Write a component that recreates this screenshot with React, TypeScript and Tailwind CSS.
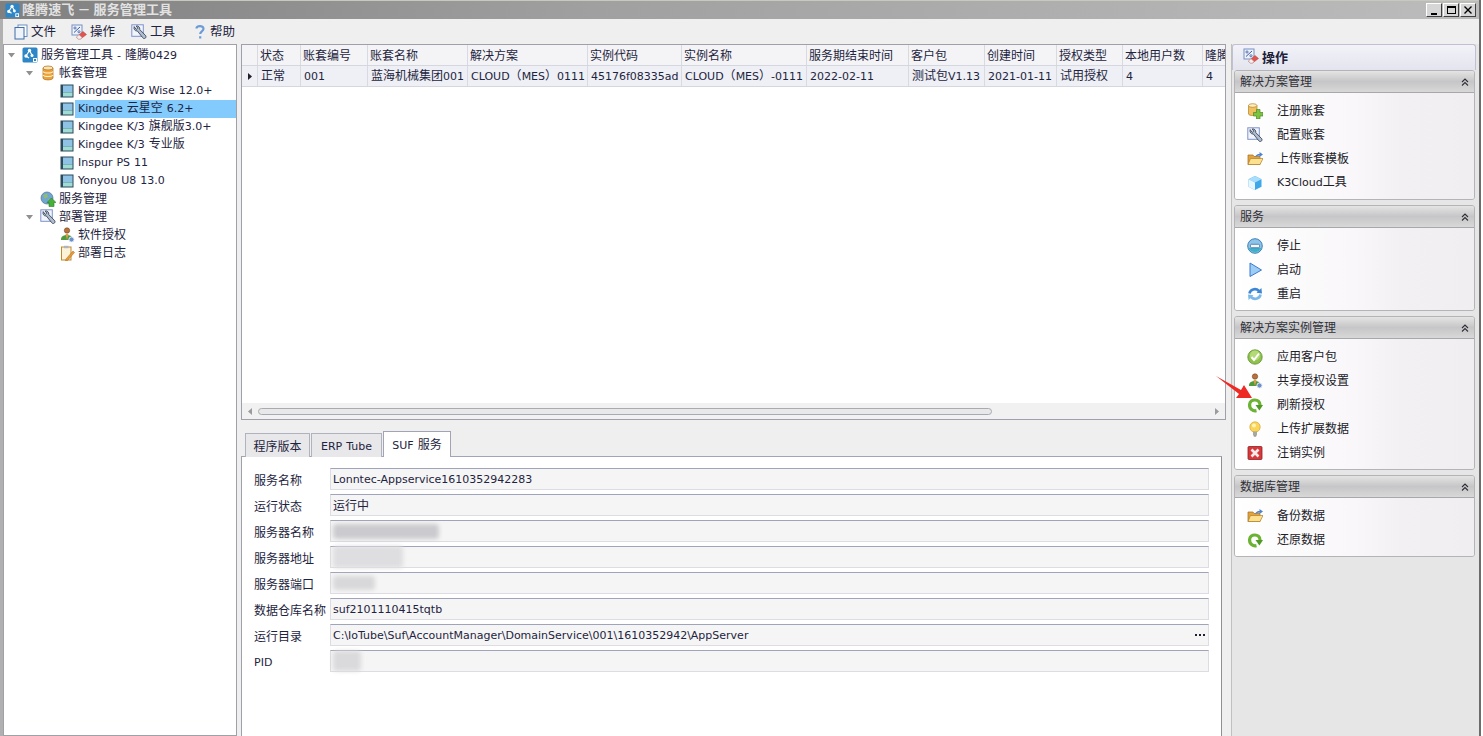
import type { ReactNode } from "react";

const FONT = "font-['Noto_Sans_CJK_SC','Liberation_Sans',sans-serif]";

type IconName =
  | "logo" | "doc" | "percent" | "wrench" | "help" | "db" | "book" | "globe" | "user" | "note"
  | "dbplus" | "folder" | "cube" | "stop" | "play" | "sync" | "check" | "green" | "bulb" | "cross";

// latin runs are set smaller in DejaVu, that is the closest to the Tahoma of the shot
function T({ children }: { children: string }) {
  return (
    <>
      {children.split(/([\x20-\x7e]+)/).map((part, i) =>
        /[\x20-\x7e]/.test(part) ? (
          <span key={i} className="font-['DejaVu_Sans',sans-serif] text-[11px] [word-spacing:0.5px]">
            {part}
          </span>
        ) : (
          part
        )
      )}
    </>
  );
}

function Icon({ name, className = "w-4 h-4" }: { name: IconName; className?: string }) {
  let body: ReactNode = null;
  if (name === "logo") {
    body = (
      <>
        <rect x="0.5" y="0.5" width="15" height="15" rx="1.5" fill="#2f86c6" />
        <path d="M7.5 3.5 L4 9 M7.5 3.5 L10.5 9 M4 9 L7 11" stroke="#fff" strokeWidth="1.2" fill="none" />
        <circle cx="7.5" cy="3.5" r="1.7" fill="#fff" />
        <circle cx="4" cy="9" r="1.7" fill="#fff" />
        <circle cx="10" cy="8.5" r="1.5" fill="#fff" />
        <rect x="11" y="11" width="4" height="4" fill="#fff" />
        <rect x="12" y="12" width="2" height="2" fill="#2f86c6" />
      </>
    );
  } else if (name === "doc") {
    body = (
      <>
        <rect x="5" y="1" width="9" height="11.5" fill="#fff" stroke="#6c8fc0" />
        <rect x="2" y="3.5" width="9" height="11.5" fill="#eef3fa" stroke="#3f6da8" />
      </>
    );
  } else if (name === "percent") {
    body = (
      <>
        <rect x="1" y="1" width="10" height="10" fill="#eef3fb" stroke="#7590c4" />
        <path d="M3 8.5 L9 3" stroke="#3b5aa0" strokeWidth="1" />
        <circle cx="4" cy="4" r="1.1" fill="none" stroke="#3b5aa0" strokeWidth="0.8" />
        <circle cx="8" cy="7.8" r="1.1" fill="none" stroke="#3b5aa0" strokeWidth="0.8" />
        <path d="M5.5 13 L12 7.5 L15.5 10.5 L9.5 15 L7 15 Z" fill="#e2534f" stroke="#b03a3a" strokeWidth="0.5" />
        <path d="M5.5 13 L8 10.8 L11 13.5 L9.5 15 L7 15 Z" fill="#f4f0ee" stroke="#b9a9a9" strokeWidth="0.5" />
      </>
    );
  } else if (name === "wrench") {
    body = (
      <>
        <rect x="0.8" y="0.8" width="11.5" height="11.5" fill="#f2f5fc" stroke="#7f92cc" />
        <path d="M3.2 2.6 C2.4 5 3.8 7.2 6.4 7 L11.6 13.6 C13 15.6 15.8 14 14.8 11.8 L8.8 5.6 C9.2 3.4 7.2 1.4 5.2 2 L6.8 4.2 L5.2 5.4 Z" fill="#aebccb" stroke="#39465e" strokeWidth="0.9" />
      </>
    );
  } else if (name === "help") {
    body = (
      <path d="M4.5 4.5 C4.5 1.5 11.5 1 11.5 4.8 C11.5 7.5 8.2 7.4 8.2 10 M8.2 12.2 L8.2 14.4" fill="none" stroke="#6c9bd8" strokeWidth="2.2" />
    );
  } else if (name === "db") {
    body = (
      <>
        <path d="M3 3 V13 C3 15.5 13 15.5 13 13 V3 Z" fill="#eda33a" stroke="#a86a1e" strokeWidth="0.7" />
        <ellipse cx="8" cy="3" rx="5" ry="2" fill="#fbe3ae" stroke="#a86a1e" strokeWidth="0.7" />
        <path d="M3 6.5 C4 8.5 12 8.5 13 6.5 M3 10 C4 12 12 12 13 10" fill="none" stroke="#fff1cf" strokeWidth="1.1" />
      </>
    );
  } else if (name === "book") {
    body = (
      <>
        <rect x="1.5" y="1.5" width="13" height="13" fill="#2b4a5c" />
        <rect x="4" y="2.5" width="9.5" height="7" fill="#8fc3e6" />
        <rect x="4" y="9.5" width="9.5" height="4" fill="#9edcd4" />
      </>
    );
  } else if (name === "globe") {
    body = (
      <>
        <circle cx="7" cy="7" r="6" fill="#6fa6d2" stroke="#50708e" strokeWidth="0.7" />
        <path d="M3 4 L7 2.5 L8 6 L4.5 8 Z M8 8 L11 8 L9.5 12 Z" fill="#8fbc78" />
        <path d="M11.5 7 L16 11.5 L14 11.5 L14 15.5 L9 15.5 L9 11.5 L7 11.5 Z" fill="#45b13a" stroke="#2d7a27" strokeWidth="0.6" />
      </>
    );
  } else if (name === "user") {
    body = (
      <>
        <circle cx="8" cy="3.5" r="2.7" fill="#b9713a" stroke="#7a4522" strokeWidth="0.6" />
        <path d="M2 12 C2 7 13 6.5 13 11 L13 13 L2 13 Z" fill="#4f9a3c" />
        <path d="M6.5 7 L8 13 L9.5 7 Z" fill="#d8a04c" />
        <circle cx="12.5" cy="12.5" r="2.6" fill="#6f8fc8" stroke="#e8eef8" strokeWidth="1" />
      </>
    );
  } else if (name === "note") {
    body = (
      <>
        <rect x="2.5" y="2" width="9.5" height="13" fill="#fbf3d8" stroke="#c0892f" />
        <rect x="5" y="0.8" width="4.5" height="2.4" fill="#b0b4bc" />
        <path d="M7 14 L14 6 L15.5 7.5 L8.5 15.5 L6.5 15.8 Z" fill="#eb9a34" stroke="#a4661c" strokeWidth="0.5" />
      </>
    );
  } else if (name === "dbplus") {
    body = (
      <>
        <path d="M1.5 2.5 V11 C2 13 9 13 10 11 V2.5 Z" fill="#f1c15f" stroke="#b37e27" strokeWidth="0.7" />
        <ellipse cx="5.7" cy="2.5" rx="4.2" ry="1.8" fill="#fff0c4" stroke="#b37e27" strokeWidth="0.7" />
        <path d="M9.5 6.5 H13 V9.5 H16 V13 H13 V16 H9.5 V13 H6.5 V9.5 H9.5 Z" fill="#7dc243" stroke="#4a8a23" strokeWidth="0.7" />
      </>
    );
  } else if (name === "folder") {
    body = (
      <>
        <path d="M1 4 H6 L7 5.5 H13 V13.5 H1 Z" fill="#e2a33e" stroke="#a26f20" strokeWidth="0.7" />
        <path d="M1 13.5 L3.5 7.5 H16 L13 13.5 Z" fill="#fbe08f" stroke="#b47f28" strokeWidth="0.7" />
        <path d="M8 6 C9 3.5 11 3 12.5 3 L12.5 1 L16 3.5 L12.5 6 L12.5 4.5 C11 4.5 9.5 5 8 6 Z" fill="#4f83d1" />
      </>
    );
  } else if (name === "cube") {
    body = (
      <>
        <path d="M8 1 L14.5 4.3 V11.7 L8 15 L1.5 11.7 V4.3 Z" fill="#3da7ea" />
        <path d="M8 1 L14.5 4.3 L8 7.5 L1.5 4.3 Z" fill="#a8defb" />
        <path d="M8 7.5 V15 L1.5 11.7 V4.3 Z" fill="#e8f7ff" />
      </>
    );
  } else if (name === "stop") {
    body = (
      <>
        <circle cx="8" cy="8" r="7.3" fill="#8cc3e8" stroke="#3e7fb8" />
        <path d="M1.5 10 C4 15.5 12 15.5 14.5 10 Z" fill="#3fb0c8" />
        <rect x="3.5" y="6.3" width="9" height="3.4" rx="1" fill="#f4f7fb" stroke="#2c5f9a" strokeWidth="0.7" />
      </>
    );
  } else if (name === "play") {
    body = <path d="M3 1 L14.5 8 L3 14.5 Z" fill="#9bcdf5" stroke="#3b78d0" strokeWidth="1" />;
  } else if (name === "sync") {
    body = (
      <>
        <path d="M2.5 7.5 C3 3.5 8.5 1.5 12 5" fill="none" stroke="#3d86d4" strokeWidth="2.6" />
        <path d="M13.5 8.5 C13 12.5 7.5 14.5 4 11" fill="none" stroke="#7ab8ea" strokeWidth="2.6" />
        <path d="M9.5 6.8 L15 7.4 L14.4 2 Z" fill="#3d86d4" />
        <path d="M6.5 9.2 L1 8.6 L1.6 14 Z" fill="#7ab8ea" />
      </>
    );
  } else if (name === "check") {
    body = (
      <>
        <circle cx="8" cy="8" r="7.2" fill="#8fc24e" stroke="#5d8f2a" strokeWidth="0.8" />
        <circle cx="8" cy="6.5" r="5" fill="#b4da78" />
        <path d="M4.5 8 L7 11 L12 4.5" fill="none" stroke="#fff" strokeWidth="2" />
      </>
    );
  } else if (name === "green") {
    body = (
      <>
        <path d="M13 8 C13 1.4 3 1.4 2.6 7.5 C2.3 12 6 14.4 9.5 13.6" fill="none" stroke="#6cb233" strokeWidth="3.2" />
        <path d="M8.5 8 L16 8 L12.4 13.6 Z" fill="#4f9a24" />
      </>
    );
  } else if (name === "bulb") {
    body = (
      <>
        <circle cx="8" cy="6" r="5.2" fill="#f9d65a" stroke="#d8a52f" strokeWidth="0.7" />
        <circle cx="7" cy="4.5" r="2" fill="#fff3b8" />
        <rect x="6" y="10.5" width="4" height="4" fill="#a8a8a0" />
        <rect x="6.8" y="14.5" width="2.4" height="1" fill="#6e6e68" />
      </>
    );
  } else if (name === "cross") {
    body = (
      <>
        <rect x="1" y="1.5" width="14" height="13" rx="1" fill="#d8383a" stroke="#8f2024" strokeWidth="0.8" />
        <path d="M4.5 4.5 L11.5 11.5 M11.5 4.5 L4.5 11.5" stroke="#f7eaea" strokeWidth="2.6" />
      </>
    );
  }
  return (
    <svg viewBox="0 0 16 16" className={`${className} shrink-0`}>
      {body}
    </svg>
  );
}

function Caret() {
  return (
    <svg viewBox="0 0 7 5" className="ml-px w-[7px] h-[5px] shrink-0">
      <path d="M0 0 H7 L3.5 4.5 Z" fill="#909090" />
    </svg>
  );
}

function TreeRow({
  indent,
  icon,
  label,
  caret,
  selected,
  latin,
}: {
  indent: string;
  icon: IconName;
  label: string;
  caret?: boolean;
  selected?: boolean;
  latin?: boolean;
}) {
  return (
    <div className={`h-[18px] flex items-center ${indent}`}>
      <div className="w-[15px] shrink-0 flex items-center">{caret && <Caret />}</div>
      <Icon name={icon} />
      <span
        className={`h-[18px] flex-1 pl-[3px] whitespace-nowrap text-[12px] text-[#1e2440] ${
          latin ? "leading-[14px]" : "leading-[16px]"
        } ${selected ? "bg-[#82cbfc]" : ""}`}
      >
        <T>{label}</T>
      </span>
    </div>
  );
}

const COLUMNS = [
  { w: "w-[43px]", head: "状态", cell: "正常" },
  { w: "w-[67px]", head: "账套编号", cell: "001" },
  { w: "w-[100px]", head: "账套名称", cell: "蓝海机械集团001" },
  { w: "w-[120px]", head: "解决方案", cell: "CLOUD（MES）0111" },
  { w: "w-[94px]", head: "实例代码", cell: "45176f08335ad" },
  { w: "w-[125px]", head: "实例名称", cell: "CLOUD（MES）-0111" },
  { w: "w-[102px]", head: "服务期结束时间", cell: "2022-02-11" },
  { w: "w-[76px]", head: "客户包", cell: "测试包V1.13" },
  { w: "w-[72px]", head: "创建时间", cell: "2021-01-11" },
  { w: "w-[66px]", head: "授权类型", cell: "试用授权" },
  { w: "w-[80px]", head: "本地用户数", cell: "4" },
  { w: "w-[24px]", head: "隆腾", cell: "4" },
];

function DataGrid() {
  return (
    <div className="h-[376px] border border-[#a0a0ac] bg-white flex flex-col">
      <div className="flex h-[21px] bg-[#f4f4f7] border-b border-[#d4d6e0] shrink-0 overflow-hidden">
        <div className="w-[16px] shrink-0 border-r border-[#d8dae2]" />
        {COLUMNS.map((c) => (
          <div key={c.head} className={`${c.w} shrink-0 overflow-hidden whitespace-nowrap border-r border-[#d8dae2] pl-[2px] leading-[19px]`}>
            {c.head}
          </div>
        ))}
      </div>
      <div className="flex h-[21px] bg-[#eef0f5] border-b border-[#d4d6e0] shrink-0 overflow-hidden">
        <div className="w-[16px] shrink-0 border-r border-[#d8dae2] flex items-center justify-center">
          <svg viewBox="0 0 4 7" className="w-1 h-[7px]">
            <path d="M0 0 L4 3.5 L0 7 Z" fill="#20202c" />
          </svg>
        </div>
        {COLUMNS.map((c) => (
          <div key={c.head} className={`${c.w} shrink-0 overflow-hidden whitespace-nowrap border-r border-[#d8dae2] pl-[3px] leading-[18px]`}>
            <T>{c.cell}</T>
          </div>
        ))}
      </div>
      <div className="flex-1" />
      <div className="h-[16px] bg-[#f1f1f1] flex items-center shrink-0 px-[6px]">
        <svg viewBox="0 0 4 7" className="w-1 h-[7px]">
          <path d="M4 0 L0 3.5 L4 7 Z" fill="#9a9aa0" />
        </svg>
        <div className="ml-[6px] w-[734px] h-[7px] rounded-full border border-[#a8aab2] bg-[#e8e8ea]" />
        <div className="flex-1" />
        <svg viewBox="0 0 4 7" className="w-1 h-[7px]">
          <path d="M0 0 L4 3.5 L0 7 Z" fill="#9a9aa0" />
        </svg>
      </div>
    </div>
  );
}

const FIELDS: { label: string; value?: string; blur?: string; more?: boolean }[] = [
  { label: "服务名称", value: "Lonntec-Appservice1610352942283" },
  { label: "运行状态", value: "运行中" },
  { label: "服务器名称", blur: "w-[106px] h-[15px] bg-[#cbcbcf]" },
  { label: "服务器地址", blur: "w-[70px] h-[22px] bg-[#dedee0]" },
  { label: "服务器端口", blur: "w-[42px] h-[14px] bg-[#d8d8da]" },
  { label: "数据仓库名称", value: "suf2101110415tqtb" },
  { label: "运行目录", value: "C:\\IoTube\\Suf\\AccountManager\\DomainService\\001\\1610352942\\AppServer", more: true },
  { label: "PID", blur: "w-[28px] h-[20px] bg-[#dadadc]" },
];

function Form() {
  return (
    <div className="flex flex-col gap-[4px] pt-[11px] pl-[12px] pr-[12px]">
      {FIELDS.map((f) => (
        <div key={f.label} className="flex items-center h-[22px]">
          <span className="w-[76px] shrink-0 whitespace-nowrap text-[12px] pt-[2px]">
            <T>{f.label}</T>
          </span>
          <div className="w-[879px] h-[22px] flex items-center bg-[#f5f5f5] border border-[#dcdce2] border-t-[#a0a4b8] pl-[2px] pr-[2px]">
            {f.value && (
              <span className="whitespace-nowrap flex-1 pb-px">
                <T>{f.value}</T>
              </span>
            )}
            {f.blur && <div className={`${f.blur} blur-[2px] rounded-sm`} />}
            {f.more && (
              <span className="flex gap-[2px] mr-[1px]">
                <i className="w-[2px] h-[2px] bg-[#202030]" />
                <i className="w-[2px] h-[2px] bg-[#202030]" />
                <i className="w-[2px] h-[2px] bg-[#202030]" />
              </span>
            )}
          </div>
        </div>
      ))}
    </div>
  );
}

function Tabs() {
  return (
    <div className="flex items-end h-[25px] pl-[4px] gap-[1px] relative z-10 -mb-px">
      <div className="h-[24px] w-[65px] bg-[#e8e8ea] border border-b-0 border-[#b0b2be] text-center leading-[23px] text-[12px]">程序版本</div>
      <div className="h-[24px] w-[71px] bg-[#e8e8ea] border border-b-0 border-[#b0b2be] text-center leading-[22px] text-[12px]">
        <T>ERP Tube</T>
      </div>
      <div className="h-[26px] w-[68px] bg-white border border-b-0 border-[#a0a4b4] text-center leading-[24px] text-[12px]">
        <T>SUF 服务</T>
      </div>
    </div>
  );
}

const SECTIONS: { title: string; items: [IconName, string][] }[] = [
  {
    title: "解决方案管理",
    items: [
      ["dbplus", "注册账套"],
      ["wrench", "配置账套"],
      ["folder", "上传账套模板"],
      ["cube", "K3Cloud工具"],
    ],
  },
  {
    title: "服务",
    items: [
      ["stop", "停止"],
      ["play", "启动"],
      ["sync", "重启"],
    ],
  },
  {
    title: "解决方案实例管理",
    items: [
      ["check", "应用客户包"],
      ["user", "共享授权设置"],
      ["green", "刷新授权"],
      ["bulb", "上传扩展数据"],
      ["cross", "注销实例"],
    ],
  },
  {
    title: "数据库管理",
    items: [
      ["folder", "备份数据"],
      ["green", "还原数据"],
    ],
  },
];

function Section({ title, items }: { title: string; items: [IconName, string][] }) {
  return (
    <div className="rounded-[3px] border border-[#b4b4b8] overflow-hidden">
      <div className="h-[22px] flex items-center justify-between pl-[5px] pr-[5px] border-b border-[#a8a8ac] bg-[linear-gradient(#e4e4e4,#c6c6c8_50%,#d8d8d8)] text-[12px] text-[#303038]">
        <span className="pb-[2px]">{title}</span>
        <svg viewBox="0 0 8 8" className="w-2 h-2">
          <path d="M1 4 L4 1 L7 4 M1 7.5 L4 4.5 L7 7.5" fill="none" stroke="#303038" strokeWidth="1.1" />
        </svg>
      </div>
      <div className="pt-[6px] pb-[4px] bg-[linear-gradient(90deg,#ffffff,#f9f7f9_50%,#f2f0f2_70%,#f0eef0)]">
        {items.map(([icon, label]) => (
          <div key={label} className="h-[24px] flex items-center pl-[12px]">
            <Icon name={icon} />
            <span className="ml-[14px] pb-[2px] text-[12px] text-[#202028] whitespace-nowrap">
              <T>{label}</T>
            </span>
          </div>
        ))}
      </div>
    </div>
  );
}

export default function App() {
  return (
    <div className={`${FONT} relative w-[1483px] h-[736px] overflow-hidden bg-white text-[12px] text-[#1e2440]`}>
      <div className="w-[1481px] h-full flex flex-col bg-[#efefef] border-l-[3px] border-r-[2px] border-l-[#b0b0b0] border-r-[#6c6c6c]">
        {/* Title bar */}
        <div className="h-[19px] shrink-0 -ml-[3px] flex items-center bg-[linear-gradient(90deg,#808080,#a0a0a0_40%,#bcbcbc)] border-t border-[#c8c8c0]">
          <Icon name="logo" className="ml-[5px] w-[15px] h-[15px]" />
          <span className="ml-[2px] pb-[2px] text-[13px] font-bold tracking-[0.1px] text-[#e2e2e2] whitespace-nowrap">隆腾速飞 － 服务管理工具</span>
          <div className="ml-auto mr-[3px] flex gap-[1px]">
            {["min", "max", "close"].map((k) => (
              <div key={k} className="w-[16px] h-[14px] bg-[#d6d6d6] border border-t-white border-l-white border-r-[#404040] border-b-[#404040] flex items-center justify-center">
                {k === "min" && <i className="w-[6px] h-[2px] bg-black mt-[7px]" />}
                {k === "max" && <i className="w-[9px] h-[8px] border border-t-2 border-black" />}
                {k === "close" && (
                  <svg viewBox="0 0 8 8" className="w-2 h-2">
                    <path d="M0.5 0.5 L7.5 7.5 M7.5 0.5 L0.5 7.5" stroke="#000" strokeWidth="1.4" />
                  </svg>
                )}
              </div>
            ))}
          </div>
        </div>

        {/* Toolbar */}
        <div className="h-[25px] shrink-0 flex items-center text-[12.5px]">
          <div className="flex items-center gap-[2px] ml-[10px]">
            <Icon name="doc" />
            <span>文件</span>
          </div>
          <div className="flex items-center gap-[3px] ml-[15px]">
            <Icon name="percent" />
            <span>操作</span>
          </div>
          <div className="flex items-center gap-[3px] ml-[16px]">
            <Icon name="wrench" />
            <span>工具</span>
          </div>
          <div className="flex items-center gap-[2px] ml-[17px]">
            <Icon name="help" />
            <span>帮助</span>
          </div>
        </div>

        <div className="flex-1 flex min-h-0">
          {/* Tree */}
          <div className="w-[234px] shrink-0 bg-white border border-[#a0a0a8] pt-[1px]">
            <TreeRow indent="pl-[3px]" icon="logo" label="服务管理工具 - 隆腾0429" caret />
            <TreeRow indent="pl-[21px]" icon="db" label="帐套管理" caret />
            <TreeRow indent="pl-[40px]" icon="book" label="Kingdee K/3 Wise 12.0+" latin />
            <TreeRow indent="pl-[40px]" icon="book" label="Kingdee 云星空 6.2+" selected latin />
            <TreeRow indent="pl-[40px]" icon="book" label="Kingdee K/3 旗舰版3.0+" latin />
            <TreeRow indent="pl-[40px]" icon="book" label="Kingdee K/3 专业版" latin />
            <TreeRow indent="pl-[40px]" icon="book" label="Inspur PS 11" latin />
            <TreeRow indent="pl-[40px]" icon="book" label="Yonyou U8 13.0" latin />
            <TreeRow indent="pl-[21px]" icon="globe" label="服务管理" />
            <TreeRow indent="pl-[21px]" icon="wrench" label="部署管理" caret />
            <TreeRow indent="pl-[40px]" icon="user" label="软件授权" />
            <TreeRow indent="pl-[40px]" icon="note" label="部署日志" />
          </div>

          <div className="w-[4px] shrink-0" />

          {/* Center column */}
          <div className="w-[985px] shrink-0 flex flex-col min-h-0">
            <DataGrid />
            <div className="h-[12px] shrink-0" />
            <Tabs />
            <div className="w-[981px] flex-1 bg-white border border-b-0 border-l-[#a0a0a8] border-r-[#909094] border-t-[#a0a4b4]">
              <Form />
            </div>
          </div>

          <div className="w-[6px] shrink-0 border-r border-[#c0c0c0]" />

          {/* Action panel */}
          <div className="flex-1 bg-[#e6e6e6] pr-[3px]">
            <div className="rounded-t-[3px] border border-b-0 border-[#c0c0d0] h-[26px] flex items-center pl-[10px] gap-[3px] bg-[linear-gradient(#f2f2f8,#e4e4ee)] font-bold text-[13px] text-[#202038]">
              <Icon name="percent" className="w-4 h-4 -mt-[3px]" />
              <span className="pb-[2px]">操作</span>
            </div>
            <div className="flex flex-col gap-[5px] pl-[2px] pr-[1px]">
              {SECTIONS.map((s) => (
                <Section key={s.title} title={s.title} items={s.items} />
              ))}
            </div>
          </div>
        </div>
      </div>

      {/* Annotation arrow over the list */}
      <svg className="absolute left-[1214px] top-[374px] w-[42px] h-[28px]" viewBox="0 0 42 28">
        <path d="M2 2 L27 16 L30 11 L38 24 L22 24 L25 20 Z" fill="#ee2a24" />
      </svg>
    </div>
  );
}
